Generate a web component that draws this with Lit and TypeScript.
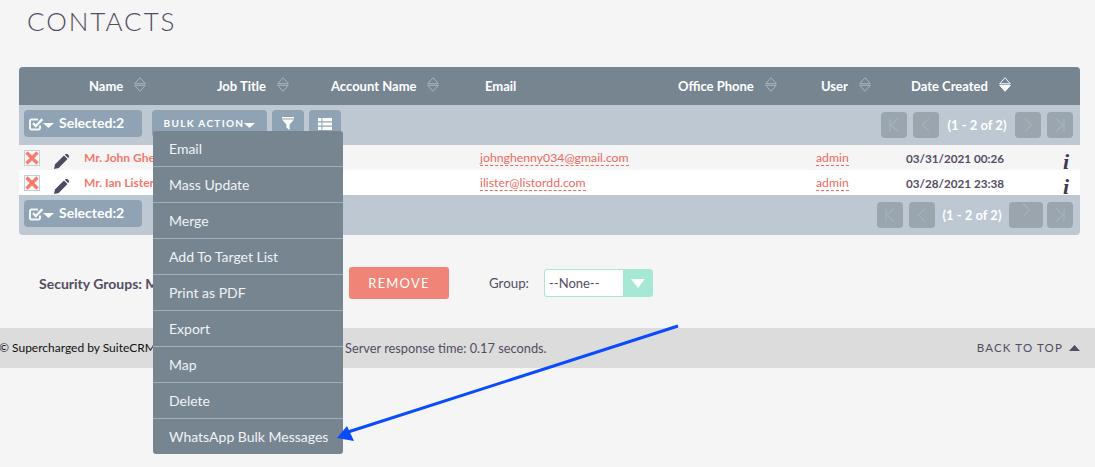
import { LitElement, html, css, svg } from "lit";
import { customElement } from "lit/decorators.js";

const sortIcon = (filled = false) => html`<svg class="sort" width="12" height="15" viewBox="0 0 12 15">
  <path d="M6 .7 11.3 6.7H.7Z" fill="none" stroke=${filled ? "#eef2f5" : "#a9b4bd"} stroke-width="1"/>
  <path d="M.7 8.3h10.6L6 14.3Z" fill=${filled ? "#fff" : "none"} stroke=${filled ? "#fff" : "#a9b4bd"} stroke-width="1"/>
</svg>`;

const checkIcon = html`<svg width="15" height="14" viewBox="0 0 15 14">
  <path d="M11 8.5V11a1.5 1.5 0 0 1-1.5 1.5h-7A1.5 1.5 0 0 1 1 11V4a1.5 1.5 0 0 1 1.5-1.5h6.5" fill="none" stroke="#f4f6f8" stroke-width="2"/>
  <path d="M4 6.2 6.8 9 13.4 2.2" fill="none" stroke="#f4f6f8" stroke-width="2.4"/>
</svg>`;

const caret = html`<svg class="caret" width="11" height="5" viewBox="0 0 11 5"><path d="M0 0h11L5.5 5Z" fill="#fff"/></svg>`;

const filterIcon = html`<svg width="12" height="13" viewBox="0 0 12 13">
  <path d="M0 0h12v1.4H0Z M0 2.6h12L7.6 7.6V13L4.4 10.6V7.6Z" fill="#fff"/>
</svg>`;

const listIcon = html`<svg width="14" height="12" viewBox="0 0 14 12">
  <path d="M0 0h3.4v3.2H0Zm4.4 0H14v3.2H4.4ZM0 4.4h3.4v3.2H0Zm4.4 0H14v3.2H4.4ZM0 8.8h3.4V12H0Zm4.4 0H14V12H4.4Z" fill="#fff"/>
</svg>`;

const pencil = html`<svg width="15" height="15" viewBox="0 0 16 16">
  <path d="M0 16l1.2-5L10.6 1.6l3.8 3.8L5 14.8Z" fill="#4a4a62"/>
  <path d="M11.6.7 12.4 0a1.3 1.3 0 0 1 1.8 0l1.6 1.6a1.3 1.3 0 0 1 0 1.8l-.7.8Z" fill="#4a4a62"/>
</svg>`;

const crossBox = html`<span class="xbox"><svg width="14" height="14" viewBox="0 0 14 14">
  <path d="M1.5 1.5 12.5 12.5M12.5 1.5 1.5 12.5" stroke="#f87c6e" stroke-width="3.2" fill="none"/>
</svg></span>`;

const pageIcons: Record<string, unknown> = {
  first: svg`<path d="M6 3.5v13M14 3.5 7 10l7 6.5" fill="none" stroke="#a4b2be" stroke-width="1.4"/>`,
  prev: svg`<path d="M13 3.5 6.5 10l6.5 6.5" fill="none" stroke="#a4b2be" stroke-width="1.4"/>`,
  next: svg`<path d="M7 3.5l6.5 6.5L7 16.5" fill="none" stroke="#a4b2be" stroke-width="1.4"/>`,
  last: svg`<path d="M14 3.5v13M6 3.5l7 6.5-7 6.5" fill="none" stroke="#a4b2be" stroke-width="1.4"/>`,
};
const pageIcon = (n: string) => html`<svg width="20" height="20" viewBox="0 0 20 20">${pageIcons[n]}</svg>`;

const rows = [
  { name: "Mr. John Ghenny", email: "johnghenny034@gmail.com", user: "admin", date: "03/31/2021 00:26" },
  { name: "Mr. Ian Lister", email: "ilister@listordd.com", user: "admin", date: "03/28/2021 23:38" },
];

const headers: [string, boolean, boolean][] = [
  ["Name", true, false],
  ["Job Title", true, false],
  ["Account Name", true, false],
  ["Email", false, false],
  ["Office Phone", true, false],
  ["User", true, false],
  ["Date Created", true, true],
];

const menu = ["Email", "Mass Update", "Merge", "Add To Target List", "Print as PDF", "Export", "Map", "Delete", "WhatsApp Bulk Messages"];

@customElement("app-root")
export class AppRoot extends LitElement {
  static styles = css`
    :host { display: block; position: relative; width: 1095px; height: 467px; overflow: hidden; background: #f5f5f5; font-family: Lato, sans-serif; color: #534d64; }
    .title { height: 67px; box-sizing: border-box; padding: 6px 0 0 27px; margin: 0; font-size: 26px; line-height: 31px; font-weight: 300; letter-spacing: 1.95px; color: #534d64; }
    .card { margin: 0 15px 0 19px; border-radius: 4px; overflow: hidden; background: #bdc8d2; }
    .grid { display: grid; grid-template-columns: 65px 128px 114px 154px 193px 143px 90px 174px; }
    .head { height: 38px; background: #778591; color: #fff; font-size: 13px; font-weight: 700; line-height: 38px; }
    .head .cell { display: flex; align-items: center; gap: 11px; padding-left: 5px; white-space: nowrap; }
    .sort { flex: none; margin-top: -3px; }
    .bar { height: 40px; display: flex; align-items: flex-start; box-sizing: border-box; padding: 5px 7px 0 5px; gap: 5px; }
    .btn { height: 27px; box-sizing: border-box; background: #8fa3b4; border-radius: 4px; color: #fff; display: flex; align-items: center; justify-content: center; }
    .btn span { margin-top: -2px; }
    .sel { width: 118px; justify-content: flex-start; padding-left: 5px; font-size: 14px; font-weight: 700; margin-right: 5px; }
    .sel svg:first-child { margin-right: -1px; }
    .sel .caret { margin-right: 5px; margin-top: 4px; }
    .bulk { width: 115px; font-size: 10px; font-weight: 700; letter-spacing: 1.32px; }
    .bulk .caret { margin-top: 3px; }
    .icon { width: 32px; }
    .pager { margin-left: auto; display: flex; align-items: center; gap: 6px; margin-top: 2px; color: #fff; font-size: 13px; font-weight: 700; }
    .pg { width: 26px; height: 26px; border-radius: 4px; background: #9aa5ad; display: flex; align-items: center; justify-content: center; }
    .pg.wide { width: 34px; align-items: flex-start; }
    .pg.wide svg { margin-top: -2px; }
    .count { width: 64px; text-align: center; white-space: nowrap; }
    .count.b { width: 62px; }
    .row { height: 25px; align-items: center; font-size: 12px; font-weight: 700; background: #f5f5f5; }
    .row.alt { background: #fff; }
    .first { display: flex; align-items: center; padding: 1px 0 0 5px; gap: 14px; }
    .xbox { width: 16px; height: 16px; box-sizing: border-box; border: 1px solid #c6cfd8; display: flex; align-items: center; justify-content: center; background: #f8f8f8; }
    .first > svg { margin-top: 7px; }
    .nm { color: #f4786a; white-space: nowrap; }
    .lnk { color: #ee6a5d; font-weight: 400; font-size: 12.25px; border-bottom: 1px dashed #ee6a5d; line-height: 14px; display: inline-block; }
    .cellc { white-space: nowrap; }
    .date { color: #534d64; font-size: 11.7px; }
    .last { display: flex; justify-content: space-between; align-items: center; }
    .i { font-family: "Liberation Serif", serif; font-style: italic; font-weight: 700; font-size: 22px; color: #3a3a50; line-height: 17px; height: 17px; margin-top: 8px; margin-right: 11px; }
    .sec { height: 32px; margin-top: 32px; display: flex; align-items: center; font-size: 14px; }
    .sec b { margin-left: 39px; width: 310px; white-space: nowrap; }
    .remove { width: 100px; height: 32px; background: #f08577; border-radius: 3px; color: #fff; font-size: 13px; letter-spacing: 1.2px; display: flex; align-items: center; justify-content: center; }
    .glabel { margin-left: 40px; width: 55px; font-size: 13.3px; }
    .select { width: 109px; height: 28px; box-sizing: border-box; border: 1px solid #a5e8d6; border-radius: 3px; background: #a5e8d6; display: flex; }
    .select span { width: 78px; background: #fff; padding-left: 4px; box-sizing: border-box; line-height: 26px; font-size: 13px; border-radius: 2px 0 0 2px; }
    .select div { flex: 1; display: flex; align-items: center; justify-content: center; }
    .foot { margin-top: 29px; height: 40px; background: #dcdcdc; display: flex; align-items: center; font-size: 12px; padding-bottom: 1px; box-sizing: border-box; }
    .foot .a { color: #111; width: 347px; white-space: nowrap; margin-left: -1px; }
    .foot .s { font-size: 12.8px; margin-left: -1px; }
    .foot .top { margin-left: auto; margin-right: 15px; font-size: 11.5px; letter-spacing: 1.15px; display: flex; align-items: center; gap: 6px; }
    .menu { position: absolute; left: 153px; top: 131px; width: 190px; background: #778591; border-radius: 3px; list-style: none; margin: 0; padding: 0; color: #f0f3f5; font-size: 14px; }
    .menu li { height: 36px; box-sizing: border-box; padding-left: 16px; line-height: 35px; border-bottom: 1px solid #a3afb9; white-space: nowrap; }
    .menu li:last-child { border-bottom: none; height: 35px; }
    .arrow { position: absolute; left: 0; top: 0; pointer-events: none; }
  `;

  private bar(bottom: boolean) {
    return html`<div class="bar">
      <div class="btn sel">${checkIcon}${caret}<span>Selected:2</span></div>
      ${bottom ? "" : html`
        <div class="btn bulk"><span>BULK ACTION</span>${caret}</div>
        <div class="btn icon">${filterIcon}</div>
        <div class="btn icon">${listIcon}</div>`}
      <div class="pager">
        <div class="pg">${pageIcon("first")}</div>
        <div class="pg">${pageIcon("prev")}</div>
        <div class="count ${bottom ? "b" : ""}">(1 - 2 of 2)</div>
        <div class="pg ${bottom ? "wide" : ""}">${pageIcon("next")}</div>
        <div class="pg" style=${bottom ? "margin-left:-2px" : ""}>${pageIcon("last")}</div>
      </div>
    </div>`;
  }

  render() {
    return html`
      <h1 class="title">CONTACTS</h1>
      <div class="card">
        <div class="grid head">
          <div></div>
          ${headers.map(([t, s, f]) => html`<div class="cell">${t}${s ? sortIcon(f) : ""}</div>`)}
        </div>
        ${this.bar(false)}
        ${rows.map((r, i) => html`<div class="grid row ${i ? "alt" : ""}">
          <div class="first">${crossBox}${pencil}</div>
          <div class="nm">${r.name}</div>
          <div></div>
          <div></div>
          <div class="cellc"><span class="lnk">${r.email}</span></div>
          <div></div>
          <div class="cellc"><span class="lnk">${r.user}</span></div>
          <div class="cellc last date"><span>${r.date}</span><span class="i">i</span></div>
        </div>`)}
        ${this.bar(true)}
      </div>
      <div class="sec">
        <b>Security Groups: Mass Assign</b>
        <div class="remove">REMOVE</div>
        <div class="glabel">Group:</div>
        <div class="select"><span>--None--</span><div>${html`<svg width="14" height="9" viewBox="0 0 14 9"><path d="M0 0h14L7 9Z" fill="#fff"/></svg>`}</div></div>
      </div>
      <div class="foot">
        <div class="a">© Supercharged by SuiteCRM</div>
        <div class="s">Server response time: 0.17 seconds.</div>
        <div class="top">BACK TO TOP <svg width="11" height="6" viewBox="0 0 11 6"><path d="M0 6h11L5.5 0Z" fill="#534d64"/></svg></div>
      </div>
      <ul class="menu">${menu.map((m) => html`<li>${m}</li>`)}</ul>
      <svg class="arrow" width="1095" height="467" viewBox="0 0 1095 467">
        <path d="M678 326 348 432" stroke="#0a4bff" stroke-width="3" fill="none"/>
        <path d="M337 438 347 426 354 441Z" fill="#0a4bff"/>
      </svg>
    `;
  }
}
